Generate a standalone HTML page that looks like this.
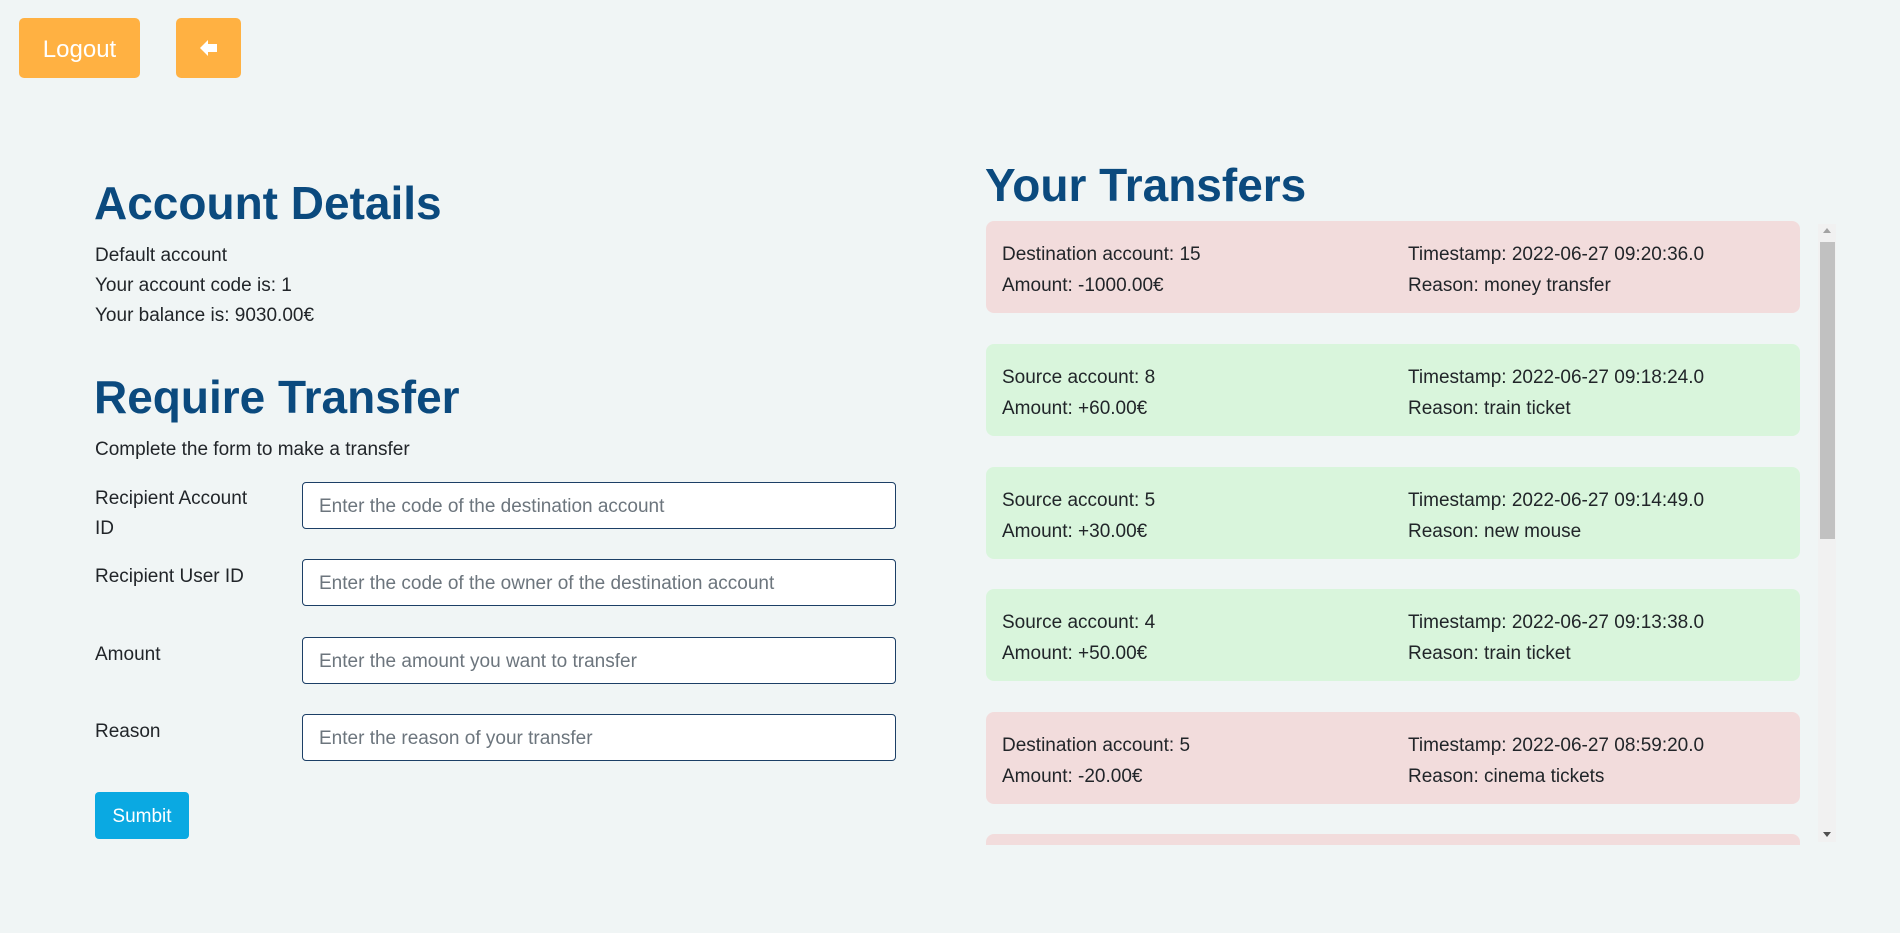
<!DOCTYPE html>
<html><head><meta charset="utf-8"><style>
*{box-sizing:border-box;margin:0;padding:0}
body{width:1900px;height:933px;background:#f0f5f5;font-family:"Liberation Sans",sans-serif;color:#212529;font-size:19px;position:relative;overflow:hidden}
.btn-o{position:absolute;top:18px;height:60px;background:#ffb142;border-radius:5px;color:#fff;font-size:24px;display:flex;align-items:center;justify-content:center}
h1{position:absolute;color:#0b4a7e;font-weight:bold;font-size:46px;line-height:1;white-space:nowrap}
.t{position:absolute;line-height:30px;white-space:nowrap}
.lab{position:absolute;left:95px;line-height:30px}
.inp{position:absolute;left:302px;width:594px;height:47px;border:1px solid #1c3f66;border-radius:4px;background:#fff;color:#6c757d;padding-left:16px;line-height:47px;font-size:19px}
.card{position:absolute;left:986px;width:814px;height:92px;border-radius:8px}
.r{background:#f2dcdc}.g{background:#d9f5dc}
.card div{position:absolute;line-height:30px;white-space:nowrap}
</style></head><body>
<div class="btn-o" style="left:19px;width:121px;padding-top:4px">Logout</div>
<div class="btn-o" style="left:176px;width:65px"><svg width="20" height="18" viewBox="0 0 20 18"><path d="M1 9 L9 1 L9 5 L18 5 L18 13 L9 13 L9 17 Z" fill="#fff"/></svg></div>

<h1 style="left:94px;top:180px">Account Details</h1>
<div class="t" style="left:95px;top:241px">Default account</div>
<div class="t" style="left:95px;top:271px">Your account code is: 1</div>
<div class="t" style="left:95px;top:301px">Your balance is: 9030.00€</div>
<h1 style="left:94px;top:374px">Require Transfer</h1>
<div class="t" style="left:95px;top:435px">Complete the form to make a transfer</div>

<div class="lab" style="top:484px">Recipient Account<br>ID</div>
<div class="inp" style="top:482px">Enter the code of the destination account</div>
<div class="lab" style="top:562px">Recipient User ID</div>
<div class="inp" style="top:559px">Enter the code of the owner of the destination account</div>
<div class="lab" style="top:640px">Amount</div>
<div class="inp" style="top:637px">Enter the amount you want to transfer</div>
<div class="lab" style="top:717px">Reason</div>
<div class="inp" style="top:714px">Enter the reason of your transfer</div>
<div style="position:absolute;left:95px;top:792px;width:94px;height:47px;background:#0aa9e2;border-radius:4px;color:#fff;text-align:center;line-height:49px">Sumbit</div>

<h1 style="left:985px;top:162px">Your Transfers</h1>
<div class="card r" style="top:221px"><div style="left:16px;top:19px">Destination account: 15</div><div style="left:16px;top:50px">Amount: -1000.00€</div><div style="left:422px;top:19px">Timestamp: 2022-06-27 09:20:36.0</div><div style="left:422px;top:50px">Reason: money transfer</div></div>
<div class="card g" style="top:344px"><div style="left:16px;top:19px">Source account: 8</div><div style="left:16px;top:50px">Amount: +60.00€</div><div style="left:422px;top:19px">Timestamp: 2022-06-27 09:18:24.0</div><div style="left:422px;top:50px">Reason: train ticket</div></div>
<div class="card g" style="top:467px"><div style="left:16px;top:19px">Source account: 5</div><div style="left:16px;top:50px">Amount: +30.00€</div><div style="left:422px;top:19px">Timestamp: 2022-06-27 09:14:49.0</div><div style="left:422px;top:50px">Reason: new mouse</div></div>
<div class="card g" style="top:589px"><div style="left:16px;top:19px">Source account: 4</div><div style="left:16px;top:50px">Amount: +50.00€</div><div style="left:422px;top:19px">Timestamp: 2022-06-27 09:13:38.0</div><div style="left:422px;top:50px">Reason: train ticket</div></div>
<div class="card r" style="top:712px"><div style="left:16px;top:19px">Destination account: 5</div><div style="left:16px;top:50px">Amount: -20.00€</div><div style="left:422px;top:19px">Timestamp: 2022-06-27 08:59:20.0</div><div style="left:422px;top:50px">Reason: cinema tickets</div></div>
<div class="card r" style="top:834px;height:11px;border-radius:8px 8px 0 0"></div>
<div style="position:absolute;left:1818px;top:224px;width:18px;height:618px;background:#f1f1f1"></div>
<div style="position:absolute;left:1820px;top:242px;width:15px;height:297px;background:#c1c1c1"></div>
<div style="position:absolute;left:1823px;top:228px;width:0;height:0;border-left:4px solid transparent;border-right:4px solid transparent;border-bottom:5px solid #a3a3a3"></div>
<div style="position:absolute;left:1823px;top:832px;width:0;height:0;border-left:4px solid transparent;border-right:4px solid transparent;border-top:5px solid #505050"></div>
</body></html>
